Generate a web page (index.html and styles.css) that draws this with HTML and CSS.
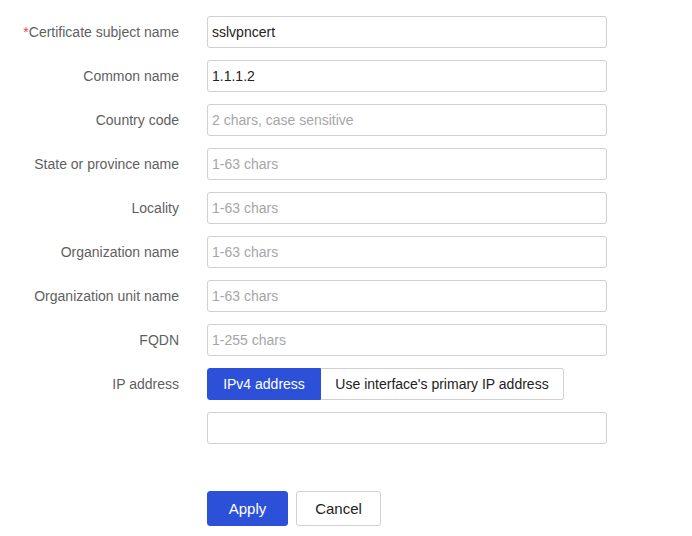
FILE: index.html
```html
<!DOCTYPE html>
<html lang="en">
<head>
    <meta charset="UTF-8">
    <title>Certificate request</title>
    <link rel="stylesheet" href="styles.css">
</head>
<body>
    <form class="cert-form">
        <div class="form-row">
            <label class="form-label"><span class="required">*</span>Certificate subject name</label>
            <input class="text-input" type="text" value="sslvpncert">
        </div>
        <div class="form-row">
            <label class="form-label">Common name</label>
            <input class="text-input" type="text" value="1.1.1.2">
        </div>
        <div class="form-row">
            <label class="form-label">Country code</label>
            <input class="text-input" type="text" placeholder="2 chars, case sensitive">
        </div>
        <div class="form-row">
            <label class="form-label">State or province name</label>
            <input class="text-input" type="text" placeholder="1-63 chars">
        </div>
        <div class="form-row">
            <label class="form-label">Locality</label>
            <input class="text-input" type="text" placeholder="1-63 chars">
        </div>
        <div class="form-row">
            <label class="form-label">Organization name</label>
            <input class="text-input" type="text" placeholder="1-63 chars">
        </div>
        <div class="form-row">
            <label class="form-label">Organization unit name</label>
            <input class="text-input" type="text" placeholder="1-63 chars">
        </div>
        <div class="form-row">
            <label class="form-label">FQDN</label>
            <input class="text-input" type="text" placeholder="1-255 chars">
        </div>
        <div class="form-row">
            <label class="form-label">IP address</label>
            <div class="ip-field">
                <div class="segmented">
                    <button type="button" class="segment active">IPv4 address</button>
                    <button type="button" class="segment">Use interface's primary IP address</button>
                </div>
                <input class="text-input" type="text">
            </div>
        </div>
        <div class="form-actions">
            <button type="button" class="btn btn-primary">Apply</button>
            <button type="button" class="btn btn-cancel">Cancel</button>
        </div>
    </form>
</body>
</html>
```

FILE: styles.css
```css
body {
    margin: 0;
    background-color: #ffffff;
    font-family: "Liberation Sans", Arial, sans-serif;
    font-size: 14px;
}

.cert-form {
    padding-top: 16px;
    display: flex;
    flex-direction: column;
    gap: 12px;
}

.form-row {
    display: grid;
    grid-template-columns: 179px 400px;
    column-gap: 28px;
    align-items: start;
}

.form-label {
    height: 32px;
    line-height: 32px;
    text-align: right;
    color: #5f5f5f;
    white-space: nowrap;
}

.required {
    color: #e0474c;
}

.text-input {
    box-sizing: border-box;
    width: 400px;
    height: 32px;
    margin: 0;
    padding: 0 4px;
    border: 1px solid #d0d0d0;
    border-radius: 3px;
    font-family: inherit;
    font-size: 14px;
    color: #222222;
    outline: none;
}

.text-input::placeholder {
    color: #a6a6a6;
}

.ip-field {
    display: flex;
    flex-direction: column;
    gap: 12px;
}

.segmented {
    display: flex;
}

.segment {
    box-sizing: border-box;
    height: 32px;
    margin: 0;
    padding: 0;
    border: 1px solid #d0d0d0;
    background-color: #ffffff;
    color: #222222;
    font-family: inherit;
    font-size: 14px;
    cursor: pointer;
}

.segment:first-child {
    width: 114px;
    border-radius: 3px 0 0 3px;
}

.segment:last-child {
    width: 243px;
    border-left: none;
    border-radius: 0 3px 3px 0;
}

.segment.active {
    background-color: #2c51d8;
    border-color: #2c51d8;
    color: #ffffff;
}

.form-actions {
    display: flex;
    gap: 8px;
    margin-top: 35px;
    padding-left: 207px;
}

.btn {
    box-sizing: border-box;
    height: 35px;
    padding: 0;
    border: 1px solid #d0d0d0;
    border-radius: 3px;
    background-color: #ffffff;
    color: #222222;
    font-family: inherit;
    font-size: 15px;
    cursor: pointer;
}

.btn-primary {
    width: 81px;
    background-color: #2c51d8;
    border-color: #2c51d8;
    color: #ffffff;
}

.btn-cancel {
    width: 85px;
}
```
